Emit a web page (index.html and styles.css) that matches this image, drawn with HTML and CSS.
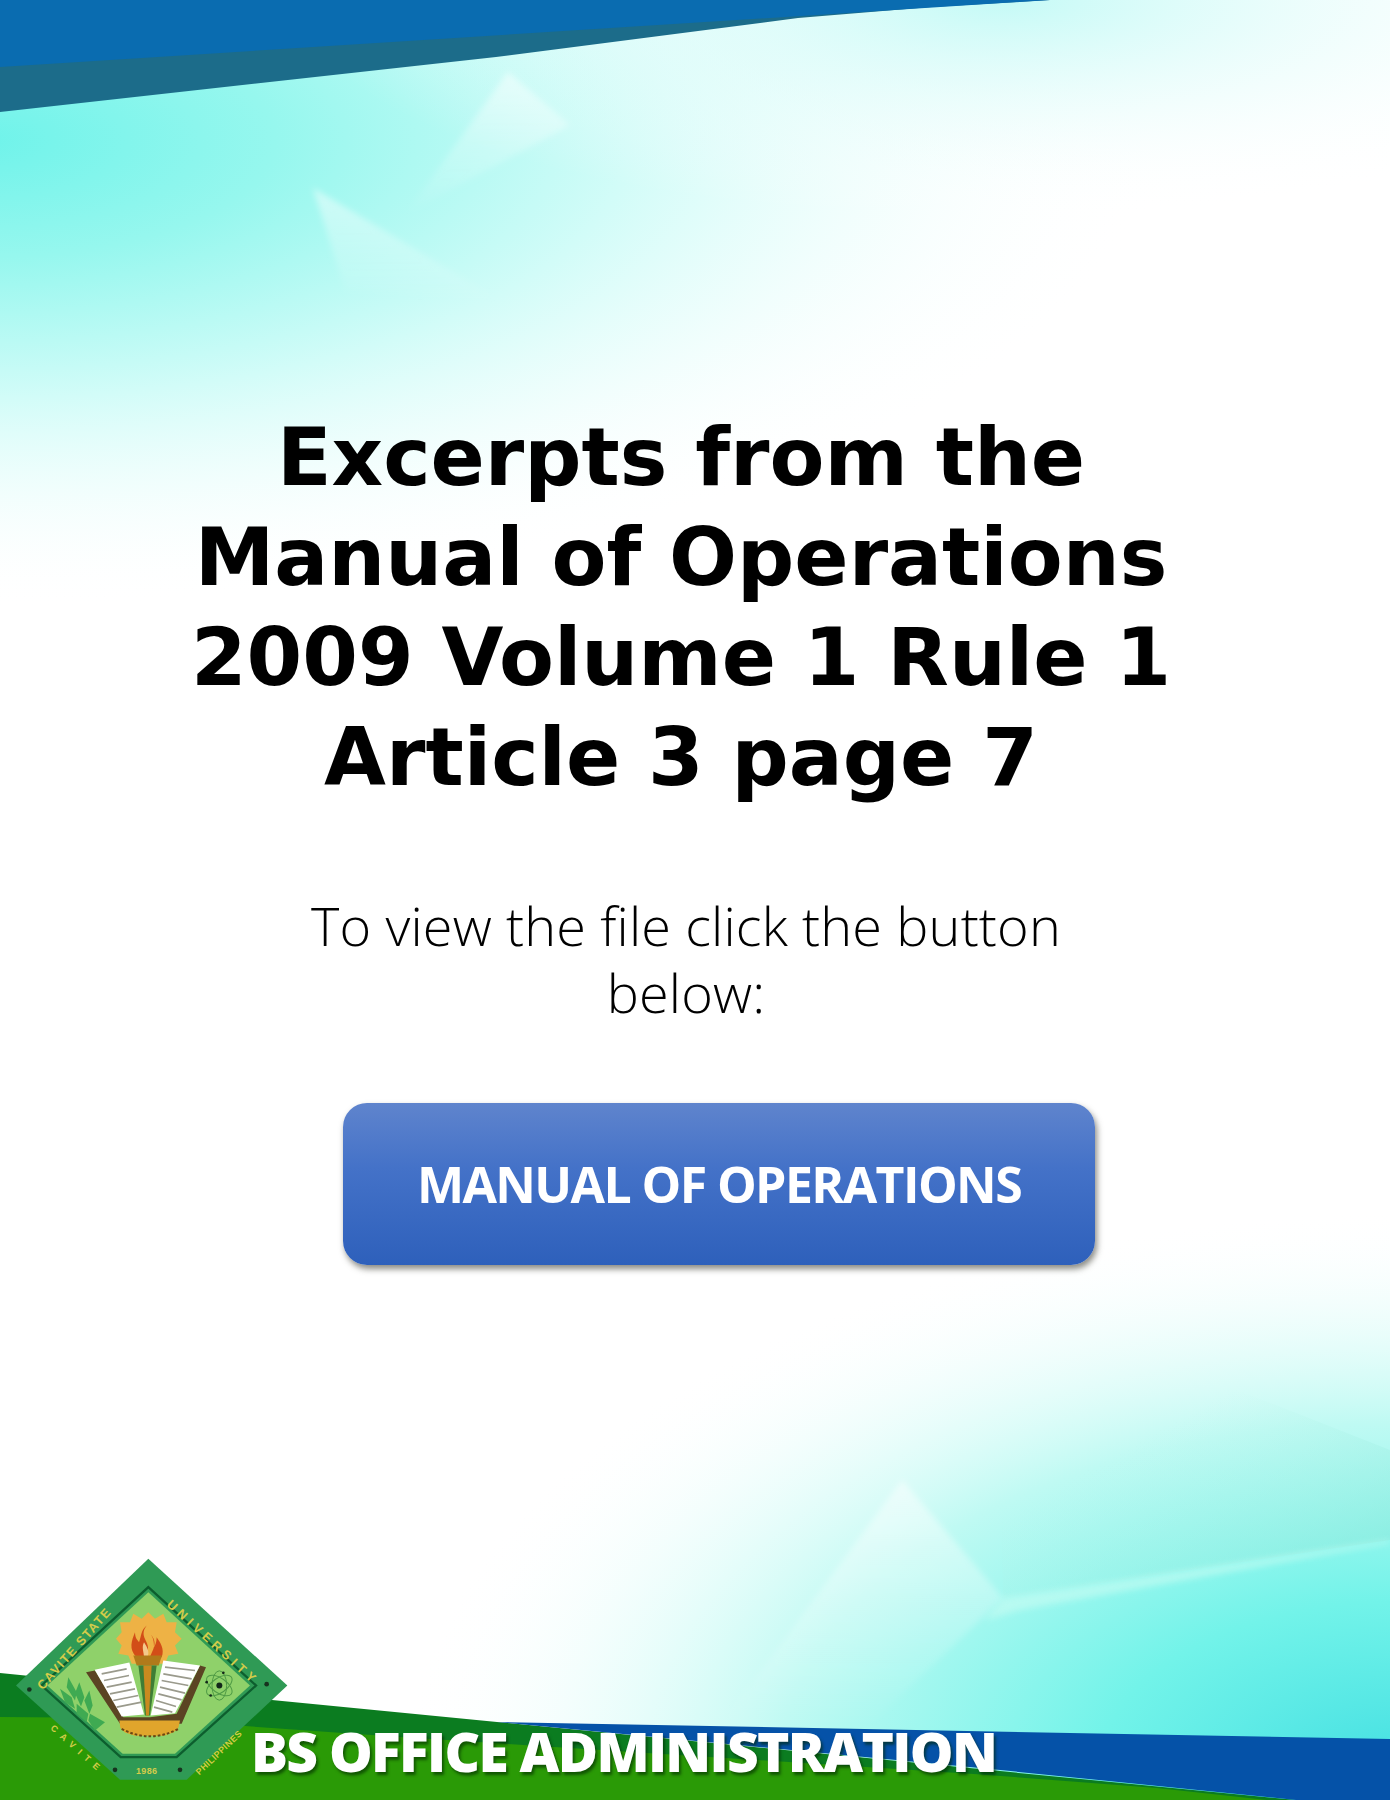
FILE: index.html
```html
<!DOCTYPE html>
<html lang="en">
<head>
<meta charset="utf-8">
<title>Manual of Operations</title>
<link rel="stylesheet" href="styles.css">
</head>
<body>
<div class="page">
  <svg class="backdrop" viewBox="0 0 1390 1800" width="1390" height="1800" aria-hidden="true">
    <defs>
      <radialGradient id="tl" gradientUnits="userSpaceOnUse" cx="0" cy="0" r="1" gradientTransform="translate(-20 140) scale(1180 470)">
        <stop offset="0" stop-color="#6ff3ea"/>
        <stop offset=".25" stop-color="#96f7ee"/>
        <stop offset=".55" stop-color="#d2fcf8"/>
        <stop offset="1" stop-color="#fff" stop-opacity="0"/>
      </radialGradient>
      <radialGradient id="tr" gradientUnits="userSpaceOnUse" cx="0" cy="0" r="1" gradientTransform="translate(1000 0) scale(700 220)">
        <stop offset="0" stop-color="#c4faf6"/>
        <stop offset="1" stop-color="#fff" stop-opacity="0"/>
      </radialGradient>
      <radialGradient id="br" gradientUnits="userSpaceOnUse" cx="0" cy="0" r="1" gradientTransform="translate(1400 1770) scale(1000 560)">
        <stop offset="0" stop-color="#44e0e2"/>
        <stop offset=".3" stop-color="#72f3e9"/>
        <stop offset=".62" stop-color="#bffaf3"/>
        <stop offset="1" stop-color="#fff" stop-opacity="0"/>
      </radialGradient>
      <linearGradient id="shine" x1="0" y1="0" x2="0" y2="1">
        <stop offset="0" stop-color="#fff" stop-opacity=".5"/>
        <stop offset="1" stop-color="#fff" stop-opacity="0"/>
      </linearGradient>
      <linearGradient id="facet" x1="1" y1="1" x2=".25" y2=".1">
        <stop offset="0" stop-color="#7fe6d8" stop-opacity=".7"/>
        <stop offset=".75" stop-color="#bdf5ea" stop-opacity="0"/>
      </linearGradient>
      <filter id="soft" x="-20%" y="-20%" width="140%" height="140%"><feGaussianBlur stdDeviation="3"/></filter>
    </defs>
    <rect width="1390" height="1800" fill="#fff"/>
    <rect width="1390" height="640" fill="url(#tl)"/>
    <rect width="1390" height="260" fill="url(#tr)"/>
    <rect y="1150" width="1390" height="650" fill="url(#br)"/>
    <polygon points="1003,1598 1390,1540 1390,1450 1110,1340 1000,1400" fill="url(#facet)"/>
    <polygon points="508,72 405,215 570,125" fill="url(#shine)" filter="url(#soft)"/>
    <polygon points="313,188 345,290 500,300" fill="url(#shine)" filter="url(#soft)"/>
    <polygon points="902,1480 721,1725 870,1725 1003,1598" fill="url(#shine)" filter="url(#soft)"/>
    <polygon points="1003,1598 1390,1540 1390,1543 1020,1610 985,1620" fill="#c8fdf3" opacity=".6" filter="url(#soft)"/>
    <polygon points="0,0 1050,0 931,7 798,18 496,57 0,112" fill="#1c6c8a"/>
    <polygon points="0,0 1050,0 0,67" fill="#0a6cb0"/>
    <polygon points="0,1673 130,1686 497,1722 1296,1800 0,1800" fill="#0b7c20"/>
    <polygon points="497,1722 1390,1739 1390,1800 1296,1800 980,1768" fill="#0552a8"/>
    <polygon points="0,1717 130,1718 400,1737 974,1774 1157,1788 1267,1800 0,1800" fill="#2a9a06"/>
  </svg>

  <main class="content">
    <h1 class="title">Excerpts from the<br>Manual of Operations<br>2009 Volume 1 Rule 1<br>Article 3 page 7</h1>
    <p class="lead">To view the file click the button<br>below:</p>
    <a class="button" href="#">MANUAL OF OPERATIONS</a>
  </main>

  <footer class="footer">
    <svg class="seal" viewBox="0 0 870 680" width="290" height="227" role="img" aria-label="Cavite State University seal">
      <defs>
        <path id="arc-a" d="M128 400 L378 118"/>
        <path id="arc-b" d="M498 145 L775 398"/>
        <path id="arc-c" d="M150 515 L300 650"/>
        <path id="arc-d" d="M598 655 L755 505"/>
      </defs>
      <polygon points="445,5 862,385 560,668 360,668 48,385" fill="#2f9a55"/>
      <polygon points="445,90 768,385 530,600 362,600 125,385" fill="none" stroke="#0d5e2e" stroke-width="7"/>
      <polygon points="445,105 750,385 525,590 368,590 142,385" fill="#8fd16a"/>
      <text class="seal-text"><textPath href="#arc-a">CAVITE STATE</textPath></text>
      <text class="seal-text seal-wide"><textPath href="#arc-b">UNIVERSITY</textPath></text>
      <text class="seal-text seal-wide seal-small"><textPath href="#arc-c">CAVITE</textPath></text>
      <text class="seal-text seal-small"><textPath href="#arc-d">PHILIPPINES</textPath></text>
      <text class="seal-text seal-small" x="408" y="652">1986</text>
      <circle cx="88" cy="397" r="7" fill="#17321e"/>
      <circle cx="800" cy="381" r="7" fill="#17321e"/>
      <circle cx="345" cy="638" r="7" fill="#17321e"/>
      <circle cx="540" cy="638" r="7" fill="#17321e"/>
      <polygon fill="#eeb245" points="445,165 465,185 490,170 500,195 530,195 525,225 545,245 525,265 535,290 505,295 495,320 445,320 395,320 385,295 355,290 365,265 348,245 365,225 360,195 390,195 400,170 425,185"/>
      <path fill="#d24e18" d="M440 205c-30 40 25 50-5 95h-25c-25-25-15-50-5-75 0 20 10 25 12 30 8-20 5-35 23-50zM450 230c25 25 10 45 0 70h35c10-25-5-45-15-60 0 15-5 25-8 30 0-15-2-30-12-40z"/>
      <path fill="#f3c98a" d="M432 255c-8 15 0 30 0 45h10c8-15 0-30-10-45z"/>
      <path fill="#b07a1a" d="M400 295h86l-10 30h-66z"/>
      <polygon fill="#5b4423" points="258,345 285,340 370,480 435,480 450,480 530,470 600,325 618,330 545,500 360,500"/>
      <polygon fill="#fff" points="284,338 388,316 432,472 365,478"/>
      <polygon fill="#fff" points="490,310 600,325 525,468 452,475"/>
      <g stroke="#9a9a8c" stroke-width="5" fill="none">
        <path d="M305 350l75-15M312 370l75-15M320 390l75-15M330 410l75-15M340 430l75-15M350 450l75-15"/>
        <path d="M495 330l90 10M490 350l85 15M485 370l80 15M480 390l75 18M475 410l70 18M468 430l60 18M462 450l55 15"/>
      </g>
      <polygon fill="#3f7d35" points="415,325 470,325 450,475 435,475"/>
      <polygon fill="#c98a1f" points="430,325 455,325 447,475 438,475"/>
      <path fill="#e0a52c" d="M358 490h182l-5 22-15 14-30 10h-85l-30-10-14-14z"/>
      <path fill="none" stroke="#6b4712" stroke-width="6" stroke-dasharray="8 6" d="M365 515q85 45 170 0"/>
      <g fill="#3faa52">
        <path d="M180 395l35 25 10 35-30-20zM205 360l25 45-5 25-25-40zM238 375l15 45-10 28-18-40zM230 440l35 30-5 25-30-25zM268 400l10 45-10 25-15-40zM270 470l45 25-30 25-20-30z"/>
      </g>
      <g fill="none" stroke="#4f9a45" stroke-width="3">
        <ellipse cx="658" cy="385" rx="44" ry="22" transform="rotate(35 658 385)"/>
        <ellipse cx="658" cy="385" rx="44" ry="22" transform="rotate(-35 658 385)"/>
        <ellipse cx="658" cy="385" rx="44" ry="22" transform="rotate(90 658 385)"/>
      </g>
      <circle cx="658" cy="385" r="9" fill="#13281a"/>
      <circle cx="670" cy="347" r="4" fill="#13281a"/>
      <circle cx="620" cy="375" r="4" fill="#13281a"/>
      <circle cx="632" cy="415" r="4" fill="#13281a"/>
    </svg>
    <div class="program">BS OFFICE ADMINISTRATION</div>
  </footer>
</div>
</body>
</html>
```

FILE: styles.css
```css
html, body {
  margin: 0;
  padding: 0;
  background: #fff;
}

.page {
  position: relative;
  width: 1390px;
  height: 1800px;
  overflow: hidden;
  display: flex;
  flex-direction: column;
  font-family: "Open Sans", "DejaVu Sans", sans-serif;
  color: #000;
}

.backdrop {
  position: absolute;
  inset: 0;
}

.content {
  position: relative;
  display: flex;
  flex-direction: column;
  align-items: center;
  padding-top: 408px;
}

.title {
  margin: 0 28px 0 0;
  width: 1340px;
  font-family: "DejaVu Sans", sans-serif;
  font-size: 80px;
  line-height: 100px;
  font-weight: 700;
  text-align: center;
}

.lead {
  margin: 84px 18px 0 0;
  width: 1350px;
  font-size: 54px;
  line-height: 67px;
  font-weight: 300;
  letter-spacing: .15px;
  text-align: center;
}

.button {
  box-sizing: border-box;
  width: 752px;
  height: 162px;
  margin: 77px 0 0 48px;
  display: flex;
  align-items: center;
  justify-content: center;
  border-radius: 24px;
  background: linear-gradient(#5f84cd, #4472c8 40%, #2e60bb);
  box-shadow: 2px 4px 6px rgba(60, 60, 50, .6);
  color: #fff;
  font-size: 50px;
  font-weight: 700;
  letter-spacing: -1.6px;
  text-decoration: none;
}

.footer {
  position: relative;
  margin-top: auto;
  height: 243px;
  display: flex;
  align-items: flex-start;
}

.seal {
  flex: none;
  margin: 0 -39px 0 0;
}

.seal-text {
  fill: #d3cc4a;
  font-family: "Liberation Sans", sans-serif;
  font-weight: 700;
  font-size: 38px;
  letter-spacing: 4px;
}

.seal-wide {
  letter-spacing: 13px;
}

.seal-small {
  font-size: 27px;
  letter-spacing: 1px;
}

.seal-wide.seal-small {
  letter-spacing: 18px;
}

.program {
  margin-top: 159px;
  color: #fff;
  font-size: 55px;
  line-height: 70px;
  font-weight: 800;
  letter-spacing: -1.7px;
  white-space: nowrap;
  text-shadow: 2px 3px 3px rgba(0, 40, 0, .6);
}
```
